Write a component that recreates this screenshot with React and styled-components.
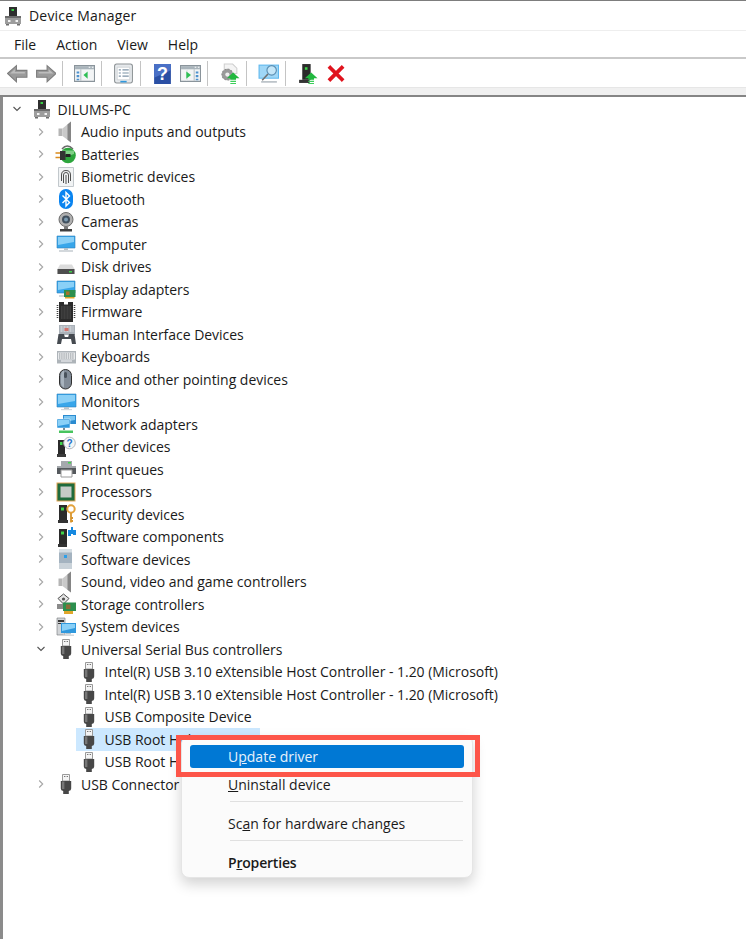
import React from "react";
import styled, { createGlobalStyle } from "styled-components";

const Global = createGlobalStyle`
  html, body { margin: 0; padding: 0; background: #fff; }
  body { font-family: "Open Sans", "Noto Sans", "Liberation Sans", sans-serif; color: #1a1a1a; }
`;
const Page = styled.div`position: relative; width: 746px; height: 939px; overflow: hidden; background: #fff;`;
const TitleBar = styled.header`
  height: 29px; border-top: 1px solid #7d7d7d; border-bottom: 1px solid #eeeeee;
  display: flex; align-items: center; padding-left: 3px; gap: 6px; font-size: 14px; letter-spacing: 0.2px;
`;
const MenuBar = styled.nav`
  height: 26px; display: flex; align-items: center; gap: 20px; padding-left: 14px;
  font-size: 14px; border-bottom: 2px solid #c9c9c9;
`;
const Toolbar = styled.div`height: 28px; display: flex; align-items: center; padding-left: 7px; background: #fff;`;
const ToolGroup = styled.div`display: flex; gap: 7px; align-items: center;`;
const ToolButton = styled.button`
  width: 21px; height: 22px; padding: 0; border: 0; background: none; display: flex; align-items: center; justify-content: center;
`;
const ToolSep = styled.span`width: 1px; height: 25px; background: #c4c4c4; margin: 0 11px 0 6px;`;
const Strip = styled.div`height: 10px; background: #f0f0f0; border-top: 1px solid #e6e6e6; border-bottom: 2px solid #858585; box-sizing: border-box;`;
const Tree = styled.main`
  border-left: 3px solid #8b8b8b; padding-top: 1px; height: 842px; box-sizing: border-box;
  font-size: 14px; letter-spacing: -0.03px;
`;
const Row = styled.div`
  height: 22.5px; display: flex; align-items: center; padding-left: ${(p) => 2 + p.$level * 23.5}px;
`;
const Twist = styled.span`width: 24px; display: flex; justify-content: center; flex: none;`;
const Entry = styled.span`
  display: flex; align-items: center; height: 22.5px; gap: 5.5px; margin-left: ${(p) => (p.$selected ? "0" : "3px")};
  padding: ${(p) => (p.$selected ? "0 2px 0 3px" : "0")};
  background: ${(p) => (p.$selected ? "#cce8ff" : "transparent")};
  white-space: nowrap;
`;
const ContextMenu = styled.div`
  position: absolute; left: 181px; top: 735px; width: 292px; height: 143px; box-sizing: border-box;
  background: #fbfbfb; border: 1px solid #e5e5e5; border-radius: 8px; padding: 9px 8px 0;
  box-shadow: 0 6px 14px rgba(0, 0, 0, 0.18); font-size: 14px; color: #1a1a1a;
`;
const MenuItem = styled.div`
  height: 23px; display: flex; align-items: center; padding-left: 38px; border-radius: 3px; margin-bottom: ${(p) => p.$after || 0}px;
  background: ${(p) => (p.$active ? "#0078d4" : "transparent")};
  color: ${(p) => (p.$active ? "#e8f2fb" : "inherit")};
  font-weight: ${(p) => (p.$strong ? 600 : 400)};
  letter-spacing: ${(p) => (p.$strong ? "-0.2px" : "0")};
  white-space: pre;
`;
const MenuDivider = styled.hr`border: 0; height: 1px; background: #e0e0e0; margin: 0 1px 10px 40px;`;
const Callout = styled.div`
  position: absolute; left: 176px; top: 735px; width: 304px; height: 42px; box-sizing: border-box;
  border: 5px solid #fd5549;
`;

const usb = (
  <>
    <path d="M6.5 .5h7v6.5h-7z" fill="#f4f4f4" stroke="#9a9a9a" />
    <path d="M8 2.5h1.4M10.6 2.5H12" stroke="#777" strokeWidth="1.1" />
    <path d="M4.8 7h10.4v7.5q0 2.2-2.4 2.6V20H7.2v-2.9q-2.4-.4-2.4-2.6z" fill="#474747" />
    <path d="M6 7.5h2.4v7.5H6z" fill="#777" />
  </>
);
const screen = (
  <>
    <path d="M1 2h18v12H1z" fill="#38a6ea" stroke="#2b7fbd" strokeWidth=".6" />
    <path d="M2 3h16v5L2 11z" fill="#8ad0f7" />
    <path d="M8 14h4v2H8z" fill="#b8c4cc" />
    <path d="M3 16h14v2H3z" fill="#d3d8dc" />
  </>
);
const upArrow = (
  <>
    <path d="M13.5 9l6 5.5h-3.3v1.5h-5.4v-1.5H7.5z" fill="#22b83f" />
    <path d="M10.8 17h5.4v1.2h-5.4zM10.8 19h5.4v1h-5.4z" fill="#3ccf5a" />
  </>
);
const windowFrame = (
  <>
    <path d="M.5 2.5h19v15H.5z" fill="#f3f5f6" stroke="#8a949b" />
    <path d="M1 3h18v3H1z" fill="#a9b4bb" />
    <path d="M14 4h1.5M17 4h1.5" stroke="#fff" />
    <path d="M6.5 6v11" stroke="#b6c0c6" />
  </>
);

const ICONS = {
  pc: (
    <>
      <path d="M6 1h8v10H6z" fill="#2e2e2e" />
      <path d="M8.5 3h2.5v2H8.5z" fill="#37cf45" />
      <path d="M2 10h16v8H2z" fill="#9d9d9d" />
      <path d="M2 10h16v2H2z" fill="#6c6c6c" />
      <path d="M5 14h2.5v2H5zM12.5 14H15v2h-2.5z" fill="#f4f4f4" />
      <path d="M3 18h3v1.5H3zM14 18h3v1.5h-3z" fill="#6e6e6e" />
    </>
  ),
  audio: (
    <>
      <path d="M2.5 6.5h4v7.5h-4z" fill="#b5b5b5" />
      <path d="M6.5 6.5L15 -.5v21l-8.5-6.5z" fill="#c9c9c9" />
      <path d="M11.5 2.5L15 -.5v21l-3.5-2.8z" fill="#858585" />
    </>
  ),
  battery: (
    <>
      <path d="M6 5q5-6 11 0" fill="none" stroke="#6b6b6b" strokeWidth="1.5" />
      <circle cx="12" cy="11.5" r="7.8" fill="#2ca53c" />
      <path d="M6 6.5h12v3.5q-6 2.5-12 0z" fill="#7fd086" />
      <path d="M-.5 9h5M-.5 13.5h5" stroke="#d98a1d" strokeWidth="1.5" />
      <path d="M4 7h5.5v9H4z" fill="#333" />
      <path d="M9.5 10h5v3h-5z" fill="#222" />
    </>
  ),
  biometric: (
    <>
      <path d="M2.5 .5h15v19h-15z" fill="#f1f3f4" stroke="#c2c8cc" />
      <path d="M5.5 14V8q0-4.5 4.5-4.5T14.5 8v6M7.5 16V8q0-2.5 2.5-2.5T12.5 8v8M10 8v9" fill="none" stroke="#4f4f4f" strokeWidth="1" />
    </>
  ),
  bluetooth: (
    <>
      <rect x="3" y="0" width="14" height="20" rx="7" fill="#0a84f0" />
      <path d="M6.5 6.5l7 7L10 17V3.5l3.5 3.5-7 7" fill="none" stroke="#fff" strokeWidth="1.4" />
    </>
  ),
  camera: (
    <>
      <circle cx="10" cy="7.5" r="7" fill="#b0b0b0" stroke="#6b6b6b" />
      <circle cx="10" cy="7.5" r="4" fill="#41505e" />
      <circle cx="10" cy="7.5" r="2" fill="#7a9ab0" />
      <path d="M8 14.5h4v2.5H8z" fill="#777" />
      <path d="M4 17h12v2.5H4z" fill="#3f3f3f" />
    </>
  ),
  computer: screen,
  disk: (
    <>
      <path d="M4 7.5h12l2.5 4.5v5h-17v-5z" fill="#dcdcdc" />
      <path d="M1.5 12h17v5h-17z" fill="#4e4e4e" />
      <path d="M13 14h3v1.5h-3z" fill="#3fd34a" />
    </>
  ),
  display: (
    <>
      {screen}
      <path d="M8 11h11.5v7H8z" fill="#2d8f4e" />
      <path d="M10 12.5h3.5v3.5H10z" fill="#a8722c" />
      <path d="M9 18h9.5v1.5H9z" fill="#e0a72b" />
    </>
  ),
  firmware: (
    <>
      <path d="M3 0h14v20H3z" fill="#2b2b2b" />
      <path d="M8 0h4v2.5H8z" fill="#fff" />
      <path d="M1.5 3v14M18.5 3v14" stroke="#444" strokeWidth="1.6" strokeDasharray="1 1" />
      <path d="M5 4h10v13H5z" fill="#3f3f3f" />
      <path d="M7 4v13M10 4v13M13 4v13" stroke="#2a2a2a" strokeWidth=".7" />
    </>
  ),
  hid: (
    <>
      <path d="M3 1h16v10H3z" fill="#aab1b8" />
      <path d="M4.5 3h13M4.5 5h13M4.5 7h13" stroke="#e8ebee" strokeWidth="1.1" strokeDasharray="2 1" />
      <path d="M8.5 4h4v3h-4z" fill="#d2736d" />
      <path d="M1 20l1.5-10H8l.8 3h3.4l.8-3h5.5L20 20h-4l-1-5H6l-1 5z" fill="#454a50" />
    </>
  ),
  keyboard: (
    <>
      <path d="M1 4h19v12.5H1z" fill="#aeb4b9" />
      <path d="M2 5.5h17v7H2z" fill="#e8eaec" />
      <path d="M3 7h15M3 9h15M3 11h15" stroke="#8d9398" strokeDasharray="1.4 .8" />
      <path d="M5 14h11" stroke="#e8eaec" strokeWidth="1.3" />
    </>
  ),
  mouse: (
    <>
      <rect x="3.5" y="0.5" width="12" height="19.5" rx="6" fill="#818b97" stroke="#2f2f2f" />
      <rect x="8" y="3" width="3" height="6" rx="1.5" fill="#49525c" />
      <path d="M5 7q0-5 3-5.5v17q-3-1-3-5z" fill="#a8b3be" />
    </>
  ),
  monitor: (
    <>
      <path d="M1 2h19v13H1z" fill="#38a6ea" stroke="#2b7fbd" strokeWidth=".6" />
      <path d="M2 3h17v6L2 12z" fill="#8ad0f7" />
      <path d="M8 15h5v2H8z" fill="#b8c4cc" />
      <path d="M5 17h11v1.2H5z" fill="#d3d8dc" />
    </>
  ),
  network: (
    <>
      <path d="M7 1h13v9H7z" fill="#2b8bd0" />
      <path d="M8 2h11v4L8 8z" fill="#7cc7f2" />
      <path d="M1 5h13v9H1z" fill="#2f98dd" stroke="#fff" strokeWidth=".5" />
      <path d="M2 6h11v4L2 12z" fill="#8ad0f7" />
      <path d="M7 14h2v2H7z" fill="#7d8b92" />
      <path d="M3 16.5h14v2.5H3z" fill="#47c45e" />
    </>
  ),
  other: (
    <>
      <path d="M2 3h7v14H2z" fill="#2b2b2b" />
      <path d="M4 5h2.5v3H4z" fill="#3fd34a" />
      <path d="M1 17h9v3H1z" fill="#3a3a3a" />
      <circle cx="13.5" cy="6" r="5.8" fill="#f4f6f8" stroke="#b3b8bd" />
      <text x="13.5" y="9.6" textAnchor="middle" fontSize="10" fontWeight="700" fill="#1f73c9" fontFamily="Liberation Sans">?</text>
    </>
  ),
  print: (
    <>
      <path d="M5 2h11v5H5z" fill="#a5a9ad" />
      <path d="M12 3h3v1.5h-3z" fill="#3fd34a" />
      <path d="M1 7h19v8H1z" fill="#55595d" />
      <path d="M1 7h19v2H1z" fill="#a4a8ac" />
      <path d="M5 11h11v7H5z" fill="#fff" stroke="#9a9a9a" />
    </>
  ),
  processor: (
    <>
      <path d="M.5 .5h19v19H.5z" fill="#e2a556" />
      <path d="M1.5 1.5h17v17h-17z" fill="#1f6b3d" />
      <path d="M4.5 4.5h11v11h-11z" fill="#c5cbc7" />
    </>
  ),
  security: (
    <>
      <path d="M3 1h8v15H3z" fill="#2b2b2b" />
      <path d="M5 3.5h3v3H5z" fill="#3fd34a" />
      <path d="M2 16h10v3H2z" fill="#333" />
      <circle cx="15" cy="5" r="3.7" fill="none" stroke="#e3a23c" strokeWidth="2" />
      <path d="M15 9v9.5M15 14h2M15 17h2" stroke="#d7942d" strokeWidth="1.8" />
    </>
  ),
  components: (
    <>
      <path d="M3 2h8v15H3z" fill="#2b2b2b" />
      <path d="M5 4.5h3v3H5z" fill="#3fd34a" />
      <path d="M2 17h9v3H2z" fill="#333" />
      <path d="M12 3h3V0h2v3h3v5h-3v-1h-2v2h-3z" fill="#1689e0" />
    </>
  ),
  softdev: (
    <>
      <path d="M3 0h13v20H3z" fill="#a4b3c0" />
      <path d="M3 0h13v3.5H3z" fill="#d5dde3" />
      <path d="M3 14h13v6H3z" fill="#c9d2d9" />
      <path d="M8 6h3v3H8z" fill="#2e9fe8" />
    </>
  ),
  storage: (
    <>
      <path d="M7.5 0l5.5 4.5-5.5 5.5L2 4.5z" fill="#e6e6e6" stroke="#4f4f4f" />
      <circle cx="7.5" cy="5" r="1.6" fill="#555" />
      <path d="M1 10h7v5H1z" fill="#8b8b8b" />
      <path d="M7 8.5h13V17H7z" fill="#2d8f4e" />
      <path d="M10 10.5h4.5V15H10z" fill="#8b6c3a" />
      <path d="M8 17h9v3H8z" fill="#e0a72b" />
    </>
  ),
  system: (
    <>
      <path d="M1 1h8v17H1z" fill="#d2d5d8" stroke="#72777b" strokeWidth=".6" />
      <path d="M2 3h6v2H2zM2 6h6v1H2z" fill="#3b3b3b" />
      <path d="M5 6h15v10H5z" fill="#2f98dd" />
      <path d="M6 7h13v4L6 14z" fill="#8ad0f7" />
      <path d="M10 16h5v1.5h-5z" fill="#b8c4cc" />
      <path d="M7 17.5h11V19H7z" fill="#d3d8dc" />
    </>
  ),
  usb,
};

const TOOL_ICONS = {
  back: (
    <>
      <path d="M.5 10L9 2.5V7h10v6.5H9V18z" fill="#9b9b9b" stroke="#7d7d7d" />
      <path d="M3 10l4.5-4v2.5H17V10z" fill="#bdbdbd" />
    </>
  ),
  forward: (
    <>
      <path d="M20 10l-8.5-7.5V7h-10v6.5h10V18z" fill="#9b9b9b" stroke="#7d7d7d" />
      <path d="M17.5 10L13 6v2.5H3.5V10z" fill="#bdbdbd" />
    </>
  ),
  paneLeft: (
    <>
      {windowFrame}
      <path d="M2.5 8h2.5v2H2.5zM2.5 11.5h2.5v2H2.5zM2.5 15h2.5v1.5H2.5z" fill="#4d92cf" />
      <path d="M9 11.5l4-3.5v7z" fill="#2fbf55" />
    </>
  ),
  properties: (
    <>
      <rect x="1.5" y="1" width="17" height="18" rx="2" fill="#e6e9ec" stroke="#8d9396" />
      <path d="M4 4h12v12H4z" fill="#fff" stroke="#c5cace" strokeWidth=".7" />
      <path d="M5.5 6.5h2M9 6.5h6M5.5 9.5h2M9 9.5h6M5.5 12.5h2M9 12.5h6" stroke="#7d93a6" strokeWidth="1.1" />
      <path d="M7 17h6v1.5H7z" fill="#2f98dd" />
    </>
  ),
  help: (
    <>
      <path d="M2 1h16v19H2z" fill="#2a4fa4" />
      <path d="M2 1h16v6L2 14z" fill="#4a70c6" />
      <text x="10" y="16" textAnchor="middle" fontSize="17" fontWeight="700" fill="#fff" fontFamily="Liberation Sans">?</text>
    </>
  ),
  paneRight: (
    <>
      {windowFrame}
      <path d="M6.5 6v11" stroke="#f3f5f6" />
      <path d="M13.5 6v11" stroke="#b6c0c6" />
      <path d="M15 8h2.5v2H15zM15 11.5h2.5v2H15zM15 15h2.5v1.5H15z" fill="#4d92cf" />
      <path d="M6 8l4.5 3.5L6 15z" fill="#2fbf55" />
    </>
  ),
  scanDoc: (
    <>
      <path d="M5 1h8l4 4v5H5z" fill="#f4f4f4" stroke="#cfcfcf" />
      <circle cx="8" cy="11" r="5.2" fill="#9a9a9a" stroke="#888" strokeDasharray="2 1" />
      <circle cx="8" cy="11" r="2" fill="#eee" />
      {upArrow}
    </>
  ),
  scan: (
    <>
      <path d="M.5 1.5h19.5v13.5H.5z" fill="#5fb8ee" />
      <path d="M1.5 2.5h17.5v11.5H1.5z" fill="#9fd7f7" />
      <circle cx="13" cy="7" r="4.5" fill="#c4e6f8" stroke="#5b8fb3" strokeWidth="1.1" />
      <path d="M9.5 10.5L4 16.5" stroke="#707070" strokeWidth="1.5" />
      <path d="M3 18h15" stroke="#b5bdc3" strokeWidth="1.5" />
    </>
  ),
  update: (
    <>
      <path d="M5 1h8v15H5z" fill="#2b2b2b" />
      <path d="M7.5 4h2.5v2.5H7.5z" fill="#3fd34a" />
      <path d="M2 16h10v3H2z" fill="#333" />
      {upArrow}
    </>
  ),
  remove: (
    <path d="M5 4.5l11 11M16 4.5l-11 11" stroke="#e0141e" strokeWidth="3.6" strokeLinecap="square" />
  ),
};

const Icon = ({ name, size = 20 }) => (
  <svg width={size} height={size} viewBox="0 0 20 20" style={{ flex: "none", overflow: "visible" }}>
    {ICONS[name]}
  </svg>
);
const ToolIcon = ({ name }) => (
  <svg width="21" height="21" viewBox="0 0 20 20">
    {TOOL_ICONS[name]}
  </svg>
);
const Chevron = ({ open }) => (
  <svg width="8" height="8" viewBox="0 0 8 8">
    <path d={open ? "M.5 2l3.5 3.5L7.5 2" : "M2.2.5L5.7 4 2.2 7.5"} fill="none" stroke={open ? "#555" : "#a6a6a6"} strokeWidth="1.1" />
  </svg>
);

const CATEGORIES = [
  ["audio", "Audio inputs and outputs"],
  ["battery", "Batteries"],
  ["biometric", "Biometric devices"],
  ["bluetooth", "Bluetooth"],
  ["camera", "Cameras"],
  ["computer", "Computer"],
  ["disk", "Disk drives"],
  ["display", "Display adapters"],
  ["firmware", "Firmware"],
  ["hid", "Human Interface Devices"],
  ["keyboard", "Keyboards"],
  ["mouse", "Mice and other pointing devices"],
  ["monitor", "Monitors"],
  ["network", "Network adapters"],
  ["other", "Other devices"],
  ["print", "Print queues"],
  ["processor", "Processors"],
  ["security", "Security devices"],
  ["components", "Software components"],
  ["softdev", "Software devices"],
  ["audio", "Sound, video and game controllers"],
  ["storage", "Storage controllers"],
  ["system", "System devices"],
];
const USB_CHILDREN = [
  "Intel(R) USB 3.10 eXtensible Host Controller - 1.20 (Microsoft)",
  "Intel(R) USB 3.10 eXtensible Host Controller - 1.20 (Microsoft)",
  "USB Composite Device",
  "USB Root Hub (USB 3.0)",
  "USB Root Hub (USB 3.0)",
];

const TreeRow = ({ level, icon, label, open, leaf, selected }) => (
  <Row $level={level}>
    <Twist>{!leaf && <Chevron open={open} />}</Twist>
    <Entry $selected={selected}>
      <Icon name={icon} />
      {label}
    </Entry>
  </Row>
);

export default function App() {
  return (
    <Page>
      <Global />
      <TitleBar>
        <Icon name="pc" />
        Device Manager
      </TitleBar>
      <MenuBar>
        <span>File</span>
        <span>Action</span>
        <span>View</span>
        <span>Help</span>
      </MenuBar>
      <Toolbar>
        <ToolGroup>
          <ToolButton><ToolIcon name="back" /></ToolButton>
          <ToolButton><ToolIcon name="forward" /></ToolButton>
        </ToolGroup>
        <ToolSep />
        <ToolButton><ToolIcon name="paneLeft" /></ToolButton>
        <ToolSep />
        <ToolButton><ToolIcon name="properties" /></ToolButton>
        <ToolSep />
        <ToolGroup>
          <ToolButton><ToolIcon name="help" /></ToolButton>
          <ToolButton><ToolIcon name="paneRight" /></ToolButton>
        </ToolGroup>
        <ToolSep />
        <ToolButton><ToolIcon name="scanDoc" /></ToolButton>
        <ToolSep />
        <ToolButton><ToolIcon name="scan" /></ToolButton>
        <ToolSep />
        <ToolGroup>
          <ToolButton><ToolIcon name="update" /></ToolButton>
          <ToolButton><ToolIcon name="remove" /></ToolButton>
        </ToolGroup>
      </Toolbar>
      <Strip />
      <Tree>
        <TreeRow level={0} icon="pc" label="DILUMS-PC" open />
        {CATEGORIES.map(([icon, label], i) => (
          <TreeRow key={i} level={1} icon={icon} label={label} />
        ))}
        <TreeRow level={1} icon="usb" label="Universal Serial Bus controllers" open />
        {USB_CHILDREN.map((label, i) => (
          <TreeRow key={i} level={2} icon="usb" label={label} leaf selected={i === 3} />
        ))}
        <TreeRow level={1} icon="usb" label="USB Connector Managers" />
      </Tree>
      <ContextMenu>
        <MenuItem $active $after={5}>U<u>p</u>date driver</MenuItem>
        <MenuItem $after={5}><u>U</u>ninstall device</MenuItem>
        <MenuDivider />
        <MenuItem $after={5}>Sc<u>a</u>n for hardware changes</MenuItem>
        <MenuDivider />
        <MenuItem $strong>P<u>r</u>operties</MenuItem>
      </ContextMenu>
      <Callout />
    </Page>
  );
}
